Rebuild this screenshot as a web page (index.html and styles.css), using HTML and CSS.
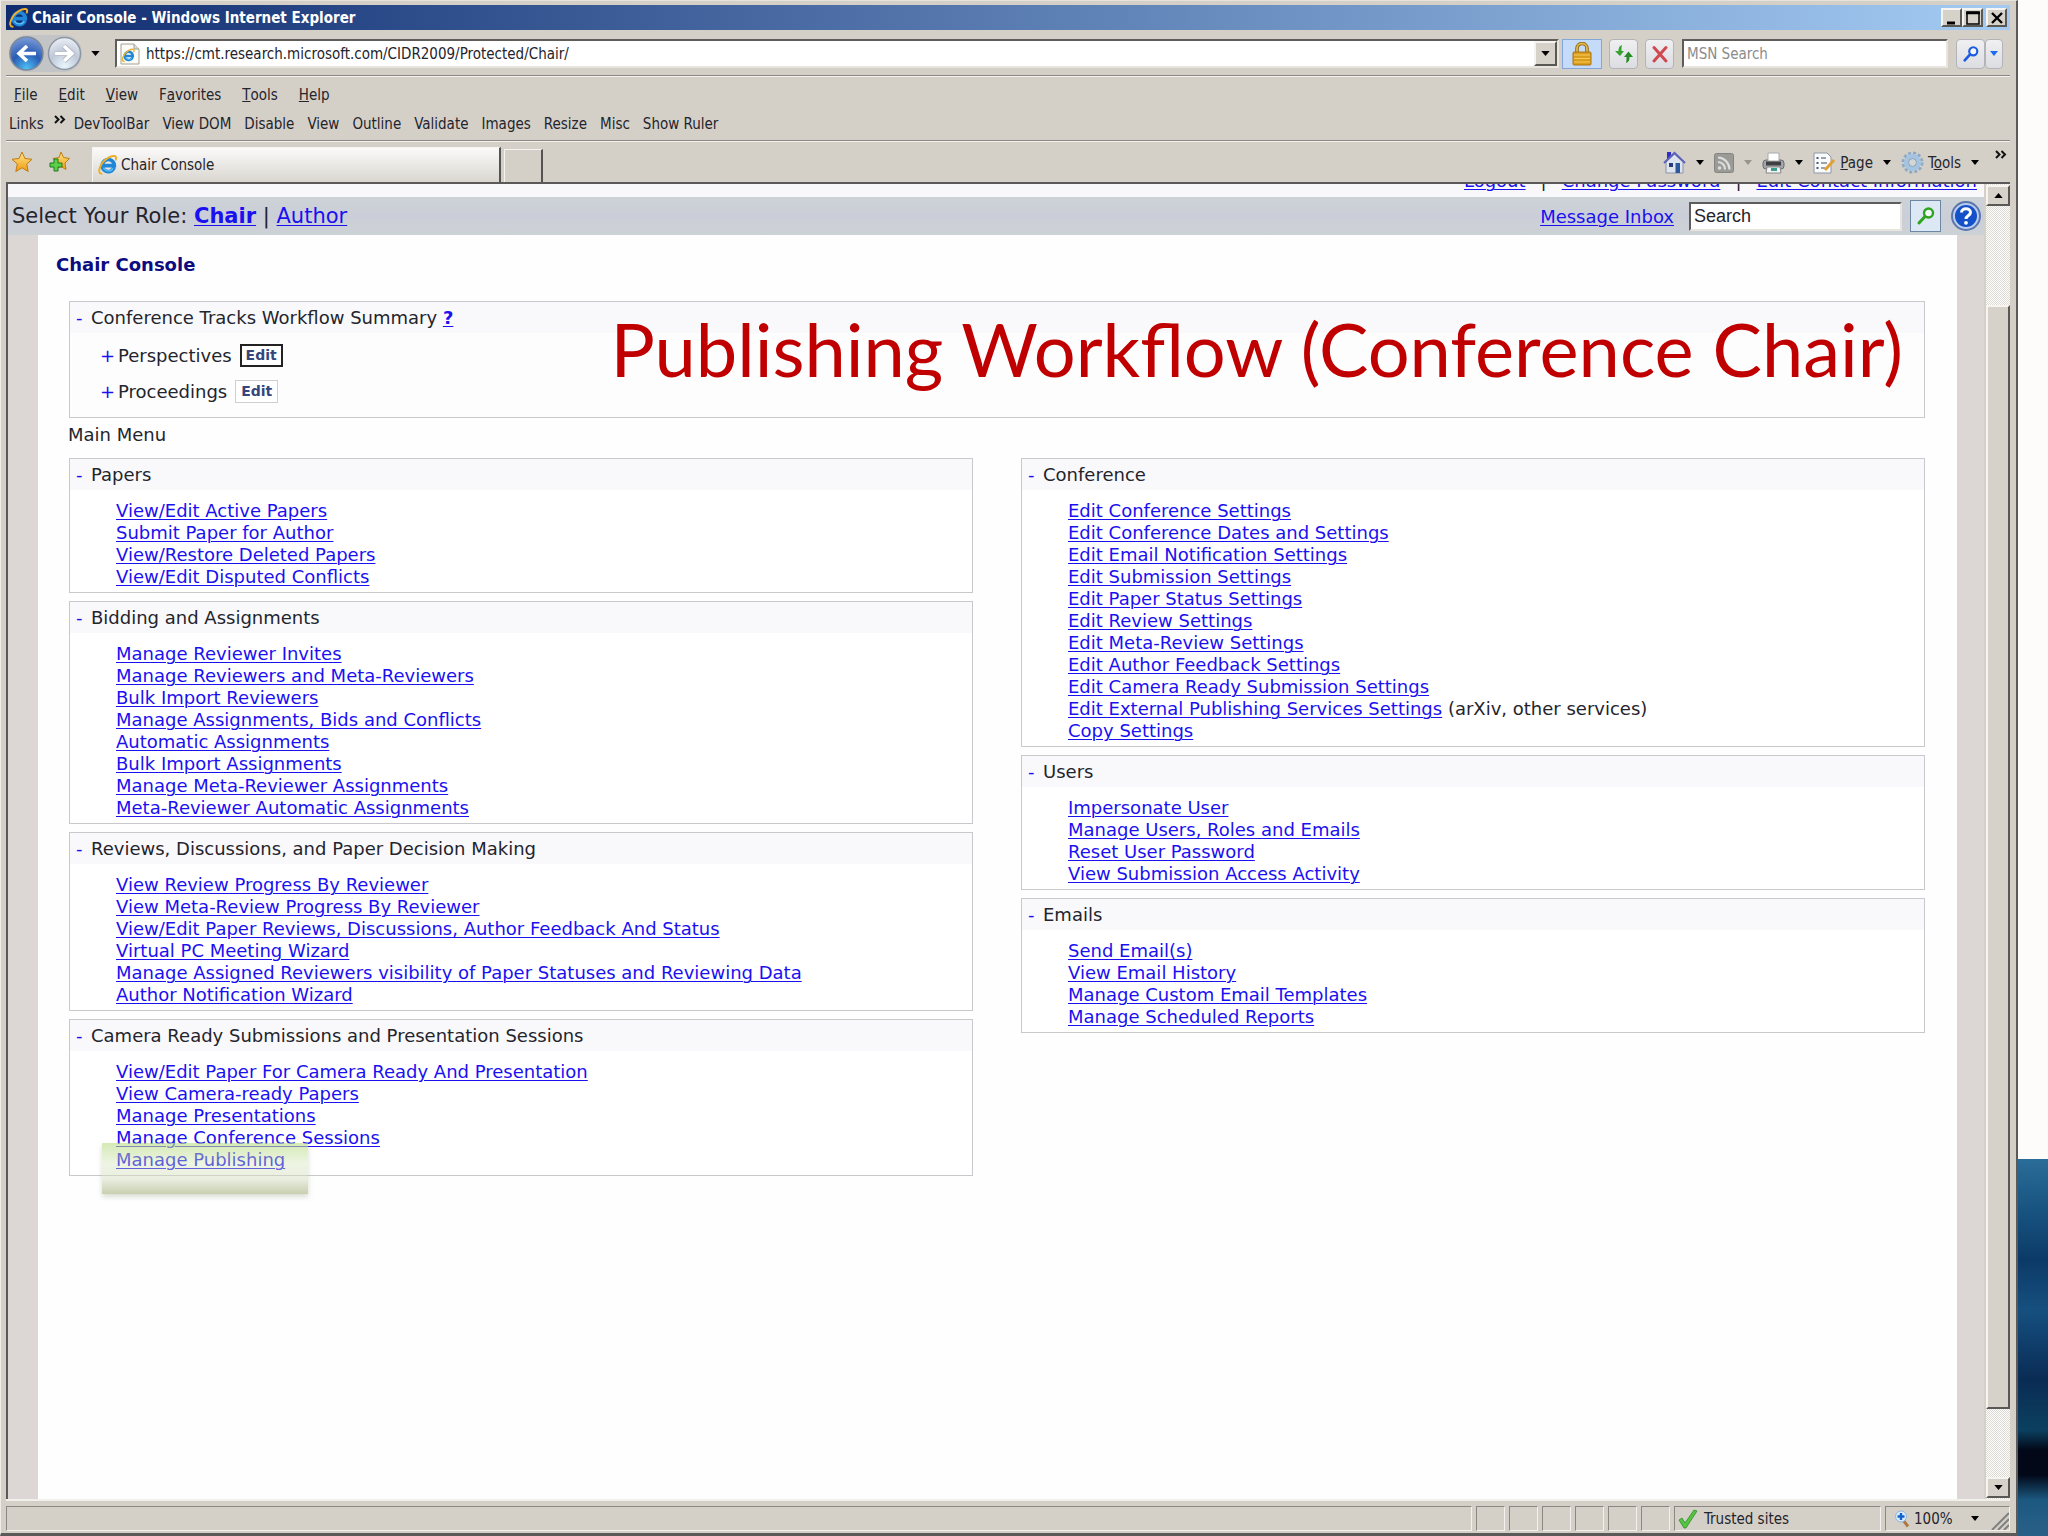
FILE: index.html
```html
<!DOCTYPE html>
<html lang="en">
<head>
<meta charset="utf-8">
<title>Chair Console</title>
<link rel="stylesheet" href="styles.css">
</head>
<body>
<svg class="defs" width="0" height="0" aria-hidden="true">
  <defs>
    <linearGradient id="gold" x1="0" y1="0" x2="0" y2="1"><stop offset="0" stop-color="#ffe88a"/><stop offset="1" stop-color="#f09a12"/></linearGradient>
    <radialGradient id="blueBall" cx=".5" cy=".95" r=".95"><stop offset="0" stop-color="#4cc0f4"/><stop offset=".5" stop-color="#2a5cb4"/><stop offset="1" stop-color="#7c9cd8"/></radialGradient>
    <radialGradient id="paleBall" cx=".5" cy=".9" r=".95"><stop offset="0" stop-color="#e8f6fc"/><stop offset=".5" stop-color="#c0c8d8"/><stop offset="1" stop-color="#f2f4f8"/></radialGradient>
    <symbol id="ie" viewBox="0 0 24 24">
      <path d="M18.6 14.6A6.6 6.6 0 1 1 18.9 12.6H7.5" fill="none" stroke="#1f86d8" stroke-width="4"/>
      <path d="M17.6 15.6A6 6 0 0 1 7 15" fill="none" stroke="#5cc1f5" stroke-width="1.4"/>
      <path d="M5 21.5C-1 21 4 9 12 4.2C17.500 .9 22.500 1.500 20.500 6" fill="none" stroke="#e9b030" stroke-width="2.2" stroke-linecap="round"/>
    </symbol>
    <symbol id="caret" viewBox="0 0 10 6"><path d="M0 0H10L5 6Z" fill="currentColor"/></symbol>
    <symbol id="lens" viewBox="0 0 20 20"><circle cx="12.500" cy="7" r="4.500" fill="#fff" fill-opacity=".6" stroke="currentColor" stroke-width="2.400"/><path d="M9 10.500L3 17" stroke="currentColor" stroke-width="3" stroke-linecap="round"/></symbol>
    <symbol id="chev" viewBox="0 0 12 9"><path d="M1 1L4.500 4.500L1 8M6.500 1L10 4.500L6.500 8" fill="none" stroke="#111" stroke-width="2"/></symbol>
  </defs>
</svg>
<div class="desktop">
<div class="window">
  <header class="titlebar">
    <svg class="i22"><use href="#ie"/></svg>
    <span class="caption">Chair Console - Windows Internet Explorer</span>
    <span class="winbtns">
      <button class="raised win" aria-label="Minimize"><svg width="14" height="14"><path d="M2 12H10" stroke="#000" stroke-width="3"/></svg></button><button class="raised win" aria-label="Maximize"><svg width="14" height="14"><path d="M1 1H13V13H1Z" fill="none" stroke="#000" stroke-width="1.500"/><path d="M0 2H14" stroke="#000" stroke-width="2.500"/></svg></button><button class="raised win last" aria-label="Close"><svg width="14" height="14"><path d="M2 2L12 12M12 2L2 12" stroke="#000" stroke-width="2.400"/></svg></button>
    </span>
  </header>

  <div class="addressrow">
    <div class="travel">
      <button class="plain" aria-label="Back"><svg width="35" height="37" viewBox="0 0 35 37"><circle cx="17.500" cy="18.500" r="16.500" fill="url(#blueBall)" stroke="#7c8798" stroke-width="1.500"/><path d="M27 18.500H11M18 11L10 18.500L18 26" fill="none" stroke="#fff" stroke-width="3.600"/></svg></button>
      <button class="plain" aria-label="Forward"><svg width="35" height="37" viewBox="0 0 35 37"><circle cx="17.500" cy="18.500" r="16" fill="url(#paleBall)" stroke="#8d96a5" stroke-width="1.500"/><path d="M8 18.500H24M17 11L25 18.500L17 26" fill="none" stroke="#a4acbc" stroke-width="5"/><path d="M8 18.500H24M17 11L25 18.500L17 26" fill="none" stroke="#fff" stroke-width="3.600"/></svg></button>
    </div>
    <button class="plain recent" aria-label="Recent pages"><svg class="caret"><use href="#caret"/></svg></button>
    <div class="sunken address">
      <svg width="20" height="22" viewBox="0 0 20 22"><path d="M1 1H14L19 6V21H1Z" fill="#fbfbf8" stroke="#a3a08e"/><path d="M14 1V6H19" fill="#ddd" stroke="#a3a08e"/><use href="#ie" x="1" y="5" width="15" height="15"/></svg>
      <input type="text" aria-label="Address" value="https://cmt.research.microsoft.com/CIDR2009/Protected/Chair/">
      <button class="raised drop" aria-label="Show addresses"><svg class="caret"><use href="#caret"/></svg></button>
    </div>
    <button class="lock" aria-label="Security report"><svg width="20" height="24" viewBox="0 0 20 24"><path d="M5 11V6.500A5 5 0 0 1 15 6.500V11" fill="none" stroke="#8d6a14" stroke-width="3.600"/><path d="M5 11V6.500A5 5 0 0 1 15 6.500V11" fill="none" stroke="#e2b64a" stroke-width="1.800"/><rect x="1" y="10" width="18" height="13" rx="1" fill="#dd9d1c" stroke="#a87412"/><path d="M2 13H18M2 16.500H18M2 20H18" stroke="#f6cb5e" stroke-width="1.200"/></svg></button>
    <button class="soft" aria-label="Refresh"><svg width="20" height="20" viewBox="0 0 20 20"><path d="M8 1C5 2 4.500 4 4.500 7H1L6 12L10 7H7.500C7.500 4 7.500 3 8 1Z" fill="#36a32c"/><path d="M12 19C15 18 15.500 16 15.500 13H19L14.500 7.500L10 13H12.500C12.500 16 12.500 17 12 19Z" fill="#258b22"/></svg></button>
    <button class="soft" aria-label="Stop"><svg width="18" height="18" viewBox="0 0 18 18"><path d="M3 2.500L15 16M15 2.500L3 16" stroke="#cf4a50" stroke-width="3" stroke-linecap="round"/></svg></button>
    <input class="sunken searchbox" type="text" aria-label="Web search" placeholder="MSN Search">
    <span class="split"><button class="soft" aria-label="Search the web"><svg class="i18 blue"><use href="#lens"/></svg></button><button class="soft narrow" aria-label="Search options"><svg class="caret small blue"><use href="#caret"/></svg></button></span>
  </div>

  <nav class="menus">
    <ul class="menubar">
      <li><button class="plain"><u>F</u>ile</button></li><li><button class="plain"><u>E</u>dit</button></li><li><button class="plain"><u>V</u>iew</button></li><li><button class="plain">F<u>a</u>vorites</button></li><li><button class="plain"><u>T</u>ools</button></li><li><button class="plain"><u>H</u>elp</button></li>
    </ul>
    <ul class="linkbar">
      <li class="lead">Links <svg class="chev"><use href="#chev"/></svg></li><li><button class="plain">DevToolBar</button></li><li><button class="plain">View DOM</button></li><li><button class="plain">Disable</button></li><li><button class="plain">View</button></li><li><button class="plain">Outline</button></li><li><button class="plain">Validate</button></li><li><button class="plain">Images</button></li><li><button class="plain">Resize</button></li><li><button class="plain">Misc</button></li><li><button class="plain">Show Ruler</button></li>
    </ul>
  </nav>

  <div class="tabrow">
    <div class="favs">
      <button class="plain" aria-label="Favorites center"><svg width="22" height="22" viewBox="0 0 22 22"><path d="M11 1L13.900 7.500L21 8.300L15.700 13L17.200 20.500L11 16.800L4.800 20.500L6.300 13L1 8.300L8.100 7.500Z" fill="url(#gold)" stroke="#c07c10"/></svg></button>
      <button class="plain" aria-label="Add to favorites"><svg width="22" height="22" viewBox="0 0 22 22"><path d="M13 1L15.500 6.500L21.500 7.500L17 12L18 18.500L13 15.500L7 18L9 12L5 7.500L11 6.500Z" fill="url(#gold)" stroke="#c07c10"/><path d="M6 8H10V12H14V16H10V20H6V16H2V12H6Z" fill="#5ad04a" stroke="#1d7d1a"/></svg></button>
    </div>
    <button class="tab"><svg class="i22"><use href="#ie"/></svg>Chair Console</button>
    <button class="tab new" aria-label="New tab"></button>
    <div class="commands">
      <button class="plain" aria-label="Home"><svg width="23" height="23" viewBox="0 0 23 23"><path d="M4 1H8V9H4Z" fill="#3030c8"/><path d="M3 11L11.500 3L20 11V22H3Z" fill="#dfe5ee" stroke="#8b93a8"/><path d="M1 12L11.500 2L22 12" fill="none" stroke="#5c62b8" stroke-width="2"/><rect x="6" y="12" width="4" height="4" fill="#2a3c78"/><rect x="12.500" y="12" width="4.500" height="10" fill="#2d5a9c"/></svg></button><svg class="caret small"><use href="#caret"/></svg>
      <button class="plain" aria-label="Feeds" disabled><svg width="20" height="20" viewBox="0 0 20 20"><rect x=".5" y=".5" width="19" height="19" rx="2" fill="#9a9a96" stroke="#85857f"/><circle cx="5.500" cy="15" r="1.800" fill="#ddd"/><path d="M4 9A7 7 0 0 1 11 16.500M4 4.500A12 12 0 0 1 15.500 16.500" fill="none" stroke="#ddd" stroke-width="2.200"/></svg></button><svg class="caret small off"><use href="#caret"/></svg>
      <button class="plain" aria-label="Print"><svg width="23" height="22" viewBox="0 0 23 22"><rect x="1" y="8" width="21" height="9" rx="3" fill="#a3a5a8" stroke="#6a6c70"/><path d="M6 1H17V9H6Z" fill="#fff" stroke="#aaa"/><path d="M4 11.500H19" stroke="#3e4044" stroke-width="4"/><path d="M5 15H18L19 21H4Z" fill="#f4f6f6" stroke="#888"/><path d="M9 17.500H15" stroke="#3aa08a" stroke-width="3"/></svg></button><svg class="caret small"><use href="#caret"/></svg>
      <button class="plain cmd"><svg width="23" height="22" viewBox="0 0 23 22"><path d="M1 1H14L18 5V21H1Z" fill="#f8fafc" stroke="#8f97a4"/><path d="M8 6H13M8 11H14M8 16H12" stroke="#7c8798" stroke-width="1.500"/><path d="M3.500 6H5.500M3.500 11H5.500M3.500 16H5.500" stroke="#4a5a78" stroke-width="2"/><path d="M21 8L12 18" stroke="#e0a038" stroke-width="3"/></svg><span><u>P</u>age</span></button><svg class="caret small"><use href="#caret"/></svg>
      <button class="plain cmd"><svg width="23" height="23" viewBox="0 0 23 23"><circle cx="11.500" cy="11.500" r="9.500" fill="none" stroke="#8fa9c2" stroke-width="3" stroke-dasharray="3 2"/><circle cx="11.500" cy="11.500" r="6.500" fill="#cfe0ee" stroke="#a4c4e4" stroke-width="4"/><circle cx="11.500" cy="11.500" r="4" fill="#d4d6d6" stroke="#7f9ab4"/></svg><span>T<u>o</u>ols</span></button><svg class="caret small"><use href="#caret"/></svg>
      <svg class="chev up"><use href="#chev"/></svg>
    </div>
  </div>

  <div class="viewport">
    <div class="page">
      <div class="account"><a href="#">Logout</a><span>|</span><a href="#">Change Password</a><span>|</span><a href="#">Edit Contact Information</a></div>
      <div class="rolebar">
        <p class="role">Select Your Role: <a href="#"><b>Chair</b></a> | <a href="#">Author</a></p>
        <a class="inbox" href="#">Message Inbox</a>
        <input class="sunken find" type="text" aria-label="Search" value="Search">
        <button class="go" aria-label="Go"><svg class="i20 green"><use href="#lens"/></svg></button>
        <button class="plain help" aria-label="Help"><svg width="30" height="30" viewBox="0 0 30 30"><circle cx="15" cy="15" r="14" fill="#b9cdee" stroke="#5b76ac" stroke-width="2"/><circle cx="15" cy="15" r="11" fill="#1450c8"/><path d="M10.500 11.500C10.500 6.500 19.500 6.500 19.500 11.500C19.500 14.500 15 14.500 15 18" fill="none" stroke="#fff" stroke-width="3"/><circle cx="15" cy="21.800" r="1.900" fill="#fff"/></svg></button>
      </div>
      <main class="sheet">
        <h1>Chair Console</h1>
        <section class="panel summary">
          <h2><a class="fold" href="#">-</a>Conference Tracks Workflow Summary <a class="q" href="#">?</a></h2>
          <p class="track"><a class="fold" href="#">+</a>Perspectives <button class="edit focus">Edit</button></p>
          <p class="track"><a class="fold" href="#">+</a>Proceedings <button class="edit">Edit</button></p>
          <div class="slidetitle">Publishing Workflow (Conference Chair)</div>
        </section>
        <p class="mainmenu">Main Menu</p>
        <div class="columns">
          <div class="column">
            <section class="panel"><h2><a class="fold" href="#">-</a>Papers</h2>
              <ul><li><a href="#">View/Edit Active Papers</a></li><li><a href="#">Submit Paper for Author</a></li><li><a href="#">View/Restore Deleted Papers</a></li><li><a href="#">View/Edit Disputed Conflicts</a></li></ul></section>
            <section class="panel"><h2><a class="fold" href="#">-</a>Bidding and Assignments</h2>
              <ul><li><a href="#">Manage Reviewer Invites</a></li><li><a href="#">Manage Reviewers and Meta-Reviewers</a></li><li><a href="#">Bulk Import Reviewers</a></li><li><a href="#">Manage Assignments, Bids and Conflicts</a></li><li><a href="#">Automatic Assignments</a></li><li><a href="#">Bulk Import Assignments</a></li><li><a href="#">Manage Meta-Reviewer Assignments</a></li><li><a href="#">Meta-Reviewer Automatic Assignments</a></li></ul></section>
            <section class="panel"><h2><a class="fold" href="#">-</a>Reviews, Discussions, and Paper Decision Making</h2>
              <ul><li><a href="#">View Review Progress By Reviewer</a></li><li><a href="#">View Meta-Review Progress By Reviewer</a></li><li><a href="#">View/Edit Paper Reviews, Discussions, Author Feedback And Status</a></li><li><a href="#">Virtual PC Meeting Wizard</a></li><li><a href="#">Manage Assigned Reviewers visibility of Paper Statuses and Reviewing Data</a></li><li><a href="#">Author Notification Wizard</a></li></ul></section>
            <section class="panel"><h2><a class="fold" href="#">-</a>Camera Ready Submissions and Presentation Sessions</h2>
              <ul><li><a href="#">View/Edit Paper For Camera Ready And Presentation</a></li><li><a href="#">View Camera-ready Papers</a></li><li><a href="#">Manage Presentations</a></li><li><a href="#">Manage Conference Sessions</a></li><li class="marked"><a href="#">Manage Publishing</a></li></ul></section>
          </div>
          <div class="column">
            <section class="panel"><h2><a class="fold" href="#">-</a>Conference</h2>
              <ul><li><a href="#">Edit Conference Settings</a></li><li><a href="#">Edit Conference Dates and Settings</a></li><li><a href="#">Edit Email Notification Settings</a></li><li><a href="#">Edit Submission Settings</a></li><li><a href="#">Edit Paper Status Settings</a></li><li><a href="#">Edit Review Settings</a></li><li><a href="#">Edit Meta-Review Settings</a></li><li><a href="#">Edit Author Feedback Settings</a></li><li><a href="#">Edit Camera Ready Submission Settings</a></li><li><a href="#">Edit External Publishing Services Settings</a> (arXiv, other services)</li><li><a href="#">Copy Settings</a></li></ul></section>
            <section class="panel"><h2><a class="fold" href="#">-</a>Users</h2>
              <ul><li><a href="#">Impersonate User</a></li><li><a href="#">Manage Users, Roles and Emails</a></li><li><a href="#">Reset User Password</a></li><li><a href="#">View Submission Access Activity</a></li></ul></section>
            <section class="panel"><h2><a class="fold" href="#">-</a>Emails</h2>
              <ul><li><a href="#">Send Email(s)</a></li><li><a href="#">View Email History</a></li><li><a href="#">Manage Custom Email Templates</a></li><li><a href="#">Manage Scheduled Reports</a></li></ul></section>
          </div>
        </div>
      </main>
    </div>
    <div class="scrollbar">
      <button class="raised arrow" aria-label="Scroll up"><svg class="caret flip"><use href="#caret"/></svg></button>
      <div class="before"></div>
      <div class="raised thumb"></div>
      <div class="after"></div>
      <button class="raised arrow" aria-label="Scroll down"><svg class="caret"><use href="#caret"/></svg></button>
    </div>
  </div>

  <footer class="status">
    <span class="cell wide"></span><span class="cell"></span><span class="cell"></span><span class="cell"></span><span class="cell"></span><span class="cell"></span><span class="cell"></span>
    <span class="cell zone"><svg width="20" height="20" viewBox="0 0 20 20"><path d="M1 11L4 9L7 14L16 1L19 2L8 19H6Z" fill="#54c443" stroke="#2f8f2a" stroke-width=".8"/></svg>Trusted sites</span>
    <span class="cell zoom"><svg width="16" height="18" viewBox="0 0 16 18"><path d="M9 10L14 16.500" stroke="#b07840" stroke-width="3"/><circle cx="7" cy="6.500" r="5.500" fill="#d9ecfc" stroke="#8fb4dc"/><path d="M7 3V10M3.500 6.500H10.500" stroke="#1463cc" stroke-width="2.400"/></svg>100%<svg class="caret small"><use href="#caret"/></svg><svg class="grip" width="18" height="18"><path d="M1 18L18 1M7 18L18 7M13 18L18 13" stroke="#808080" stroke-width="2"/></svg></span>
  </footer>
</div>
<div class="wallpaper"></div>
</div>
</body>
</html>
```
FILE: styles.css
```css
* { box-sizing: border-box; }
body, h1, h2, p, ul { margin: 0; padding: 0; }
ul { list-style: none; }
button, input { font: inherit; color: inherit; margin: 0; padding: 0; border: 0; border-radius: 0; background: none; }
svg { display: block; flex: none; }
body { font-family: "DejaVu Sans", Verdana, sans-serif; font-size: 18px; color: #24242c; }
.defs { position: absolute; }
a { color: #1a10f0; text-decoration: underline; text-underline-offset: 2px; text-decoration-thickness: 1px; }

.desktop { display: flex; min-height: 100vh; }
.window { flex: 1; min-width: 0; display: flex; flex-direction: column; background: #d4d0c8; padding: 4px 6px 3px 5px; border-top: 1px solid #e6e2dc; border-left: 1px solid #f0ece6; border-right: 2px solid #5c5a58; border-bottom: 3px solid #5c5a58; }
.wallpaper { width: 30px; background: linear-gradient(#fdfcfb 1159px, transparent 1159px), linear-gradient(#2a6d98 1159px, #185480 1210px, #0c3a68 1260px, #16507e 1310px, #10406e 1340px, #0a2c54 1380px, #0b4060 1430px, #020818 1450px, #020818 1475px, #1c5880 1500px, #2a6088); }

.titlebar, .addressrow, .menus, .tabrow, .status { font-family: "DejaVu Sans Condensed", "DejaVu Sans", Tahoma, sans-serif; font-size: 15px; }
.i18 { width: 18px; height: 18px; }
.i20 { width: 20px; height: 20px; }
.i22 { width: 22px; height: 22px; }
.blue { color: #1c5ce0; }
.green { color: #2ca41c; }
.caret { width: 9px; height: 5px; color: #000; }
.caret.small { width: 8px; height: 5px; }
.caret.blue { color: #1c6cf0; }
.caret.off { color: #97958f; }
.flip { transform: rotate(180deg); }
.chev { width: 12px; height: 9px; }
.plain { display: flex; align-items: center; }
.raised { background: #d6d2ca; border: 2px solid; border-color: #f6f4f0 #5a5854 #5a5854 #f6f4f0; display: flex; align-items: center; justify-content: center; }
.sunken { background: #fff; border: 2px solid; border-color: #5f5d5a #e8e5df #e8e5df #5f5d5a; }

.titlebar { height: 25px; display: flex; align-items: center; gap: 2px; padding: 0 3px 0 2px; color: #fff; background: linear-gradient(90deg, #0f2c70, #a3cbf2); font-weight: bold; }
.caption { flex: 1; }
.winbtns { display: flex; }
.win { width: 21px; height: 19px; }
.win.last { margin-left: 3px; }

.addressrow { height: 46px; display: flex; align-items: center; padding: 2px 7px 0 3px; border-bottom: 1px solid #8b8883; }
.travel { display: flex; gap: 3px; width: 73px; background: #c3c4c6; border-radius: 18px; }
.recent { margin: 0 15px 0 9px; }
.address { flex: 1; height: 29px; display: flex; align-items: center; gap: 6px; padding-left: 3px; }
.address input { flex: 1; }
.drop { width: 23px; height: 25px; }
.lock { width: 40px; height: 30px; margin: 0 7px 0 3px; background: #c5dbfa; border: 1px solid #84a6d8; display: grid; place-items: center; }
.soft { width: 29px; height: 30px; display: grid; place-items: center; background: linear-gradient(#f0f0f2, #dcdde2); border: 1px solid #b4b4b8; border-radius: 4px; margin-right: 7px; }
.searchbox { width: 266px; height: 29px; padding-left: 3px; margin: 0 8px 0 1px; }
.searchbox::placeholder { color: #8c8c8c; opacity: 1; }
.split { display: flex; }
.split .soft { margin: 0; }
.split .narrow { width: 18px; }

.menus { border-top: 1px solid #f4f2ee; border-bottom: 1px solid #8b8883; height: 65px; padding: 3px 0 0 3px; }
.menubar, .linkbar { display: flex; height: 29px; align-items: center; }
.menubar { gap: 21px; padding-left: 5px; }
.linkbar { gap: 13px; }
.lead { display: flex; gap: 10px; margin-right: -5px; }

.tabrow { border-top: 1px solid #f4f2ee; height: 41px; display: flex; align-items: flex-end; }
.favs { display: flex; gap: 15px; width: 86px; padding: 0 0 9px 5px; }
.tab { width: 409px; height: 35px; display: flex; align-items: center; gap: 2px; padding: 0 0 0 4px; background: linear-gradient(#fbfaf9, #d9d6d0); border: 1px solid #f6f4f0; border-right: 2px solid #55534f; border-bottom: 0; }
.tab.new { width: 39px; height: 33px; margin-left: 3px; background: #d4d0c8; }
.commands { margin-left: auto; display: flex; align-items: center; height: 39px; gap: 10px; padding-right: 3px; }
.cmd { gap: 4px; }
.chev.up { margin: -16px 0 0 6px; }

.viewport { flex: 1; display: flex; border-top: 2px solid #5c5a58; border-left: 2px solid #5c5a58; }
.page { flex: 1; min-width: 0; display: flex; flex-direction: column; background: #dcd6d5; }
.account { height: 13px; overflow: hidden; display: flex; justify-content: flex-end; align-items: flex-end; gap: 15px; line-height: 24px; padding: 0 7px 4px 0; background: #f8f8fb; }
.rolebar { height: 38px; display: flex; align-items: center; background: linear-gradient(#ccd3d6, #cbced8 50%, #cdd2d6); padding: 0 3px 0 4px; }
.role { flex: 1; font-size: 21px; }
.inbox { margin-right: 15px; }
.find { width: 213px; height: 29px; padding-left: 3px; font-family: "Liberation Sans", Arial, sans-serif; }
.go { width: 31px; height: 32px; margin: 0 10px 0 8px; display: grid; place-items: center; background: #dce8f4; border: 1px solid #6f86a4; }

.sheet { flex: 1; margin: 0 27px 0 30px; background: #fefefe; padding: 18px 32px 40px 31px; }
h1 { font-size: 18px; line-height: 24px; color: #0c0c80; margin-left: -13px; }
.panel { border: 1px solid #c9c9cd; background: #fff; padding-bottom: 3px; }
h2 { font-size: 18px; font-weight: normal; height: 31px; line-height: 31px; background: #f9f9fc; padding-left: 6px; margin-bottom: 10px; white-space: nowrap; }
.fold { text-decoration: none; display: inline-block; width: 15px; }
.q { font-weight: bold; }
.panel ul { padding-bottom: 1px; }
.panel li { line-height: 22px; height: 22px; padding-left: 46px; white-space: nowrap; position: relative; }
.summary { margin-top: 24px; padding-bottom: 8px; position: relative; background: #fdfdfe; }
.summary h2 { margin-bottom: 4px; }
.track { height: 36px; display: flex; align-items: center; padding-left: 30px; }
.track .fold { width: 18px; }
.edit { margin-left: 8px; width: 43px; height: 23px; background: #fff; border: 1px solid #cfcfd4; color: #33477c; font-weight: bold; font-size: 14px; }
.edit.focus { border: 2px solid #222; }
.slidetitle { position: absolute; right: 21px; top: 3px; font-family: Lato, Carlito, sans-serif; font-size: 74px; line-height: 88px; color: #c00000; white-space: nowrap; }
.mainmenu { line-height: 24px; margin: 5px 0 11px -1px; }
.columns { display: grid; grid-template-columns: 1fr 1fr; gap: 48px; align-items: start; }
.column { display: grid; gap: 8px; }
.marked::after { content: ""; position: absolute; left: 32px; top: -6px; width: 206px; height: 51px; background: linear-gradient(rgba(190, 222, 140, .65), rgba(205, 225, 175, .35) 40%, rgba(215, 222, 195, .5) 70%, rgba(195, 202, 168, .9)); box-shadow: 0 3px 5px rgba(150, 160, 130, .35); }

.scrollbar { width: 24px; display: flex; flex-direction: column; background: repeating-conic-gradient(#fff 0 25%, #dcd8d2 0 50%) 0 0 / 2px 2px; padding: 1px 0; margin-left: 2px; }
.arrow { height: 21px; }
.before { flex: 100; }
.thumb { flex: 1107; }
.after { flex: 68; }

.status { height: 31px; display: flex; gap: 4px; padding-top: 5px; border-top: 2px solid #f2f0ec; }
.cell { width: 29px; height: 25px; border: 1px solid; border-color: #8b8883 #f4f2ee #f4f2ee #8b8883; display: flex; align-items: center; }
.cell.wide { flex: 1; }
.cell.zone { width: 207px; gap: 6px; padding-left: 3px; }
.cell.zoom { width: 125px; gap: 4px; padding-left: 8px; }
.zoom .caret { margin-left: 14px; }
.grip { margin: 4px 0 0 auto; }
```
